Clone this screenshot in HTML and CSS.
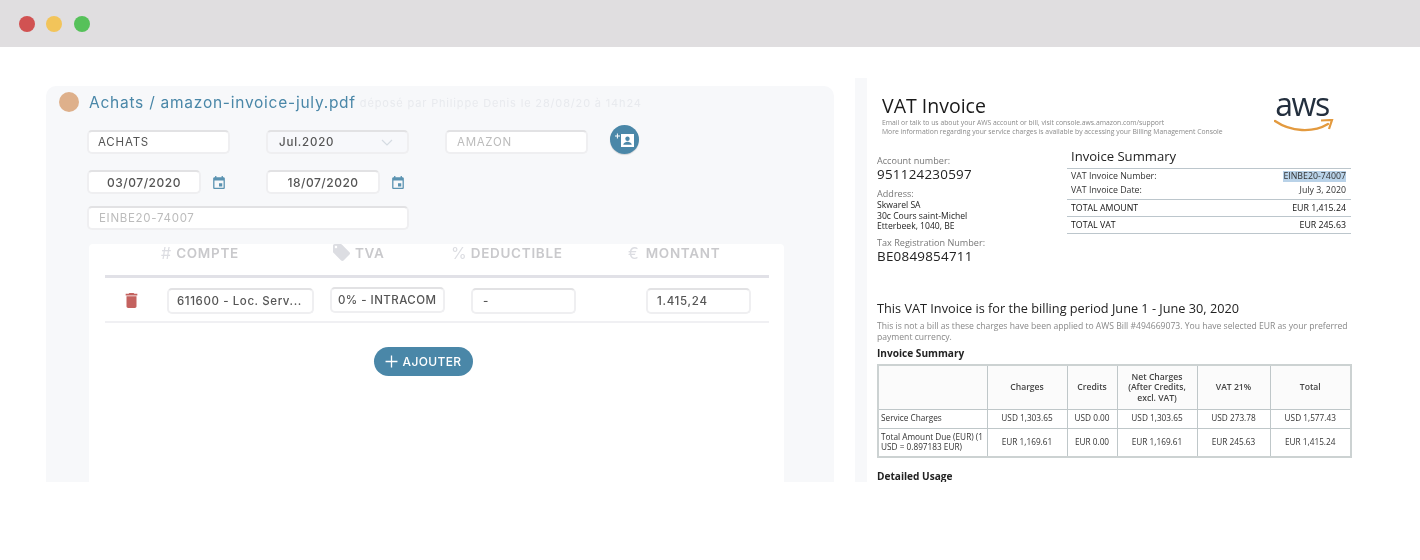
FILE: index.html
```html
<!DOCTYPE html>
<html lang="fr">
<head>
<meta charset="utf-8">
<title>Facture</title>
<link rel="stylesheet" href="styles.css">
</head>
<body>
<header class="bar">
  <span class="dot red"></span><span class="dot yellow"></span><span class="dot green"></span>
</header>
<main class="stage">
  <section class="panel">
    <div class="head">
      <span class="avatar"></span>
      <span class="title">Achats / amazon-invoice-july.pdf</span>
      <span class="meta">déposé par Philippe Denis le 28/08/20 à 14h24</span>
    </div>
    <div class="form">
      <div class="form-row">
        <div class="field wide plain">ACHATS</div>
        <div class="field wide select">Jul.2020
          <svg class="chev" viewBox="0 0 12 7"><path d="M1 1l5 5 5-5" fill="none" stroke="#d5dbe2" stroke-width="1.2"/></svg>
        </div>
        <div class="field wide ghost">AMAZON</div>
        <button class="round">
          <svg viewBox="0 0 20 16" width="20" height="16"><path d="M6 2h13v13H6z" fill="#fff"/><circle cx="12.5" cy="6.8" r="2.2" fill="#4a87a8"/><path d="M8.3 12.7c0-2 2.8-3 4.2-3s4.2 1 4.2 3z" fill="#4a87a8"/><path d="M2.4 1.5v5M0 4h5" stroke="#fff" stroke-width="1" fill="none"/></svg>
        </button>
      </div>
      <div class="form-row">
        <div class="date-cell">
          <div class="field date">03/07/2020</div>
          <svg class="cal" viewBox="3 1 18 20"><path d="M17 12h-5v5h5v-5zM16 1v2H8V1H6v2H5c-1.11 0-1.99.9-1.99 2L3 19c0 1.1.89 2 2 2h14c1.1 0 2-.9 2-2V5c0-1.1-.9-2-2-2h-1V1h-2zm3 18H5V8h14v11z"/></svg>
        </div>
        <div class="date-cell">
          <div class="field date">18/07/2020</div>
          <svg class="cal" viewBox="3 1 18 20"><path d="M17 12h-5v5h5v-5zM16 1v2H8V1H6v2H5c-1.11 0-1.99.9-1.99 2L3 19c0 1.1.89 2 2 2h14c1.1 0 2-.9 2-2V5c0-1.1-.9-2-2-2h-1V1h-2zm3 18H5V8h14v11z"/></svg>
        </div>
      </div>
      <div class="field ref ghost">EINBE20-74007</div>
    </div>
    <div class="card">
      <div class="cols">
        <div class="col c1"><span class="sym">#</span>COMPTE</div>
        <div class="col c2"><svg class="tag" viewBox="2 2 20 20"><path d="M21.41 11.58l-9-9C12.05 2.22 11.55 2 11 2H4c-1.1 0-2 .9-2 2v7c0 .55.22 1.05.59 1.42l9 9c.36.36.86.58 1.41.58.55 0 1.05-.22 1.41-.59l7-7c.37-.36.59-.86.59-1.41 0-.55-.23-1.06-.59-1.42zM5.5 7C4.67 7 4 6.33 4 5.5S4.67 4 5.5 4 7 4.67 7 5.5 6.33 7 5.5 7z"/></svg>TVA</div>
        <div class="col c3"><span class="sym">%</span>DEDUCTIBLE</div>
        <div class="col c4"><span class="sym">€</span>MONTANT</div>
      </div>
      <div class="line row">
        <svg class="trash" viewBox="5 3 14 18"><path d="M6 19c0 1.1.9 2 2 2h8c1.1 0 2-.9 2-2V7H6v12zM19 4h-3.5l-1-1h-5l-1 1H5v2h14V4z"/></svg>
        <div class="field cell f1">611600 - Loc. Serv...</div>
        <div class="field cell f2">0% - INTRACOM</div>
        <div class="field cell f3">-</div>
        <div class="field cell f4">1.415,24</div>
      </div>
      <div class="add-wrap">
        <button class="add"><svg viewBox="0 0 12 12" width="13" height="13"><path d="M6 .5v11M.5 6h11" stroke="#fff" stroke-width="1.2" fill="none"/></svg>AJOUTER</button>
      </div>
    </div>
  </section>

  <section class="doc-wrap">
    <div class="doc">
      <div class="doc-top">
        <div>
          <h1 class="vat">VAT Invoice</h1>
          <p class="tiny">Email or talk to us about your AWS account or bill, visit console.aws.amazon.com/support<br>More information regarding your service charges is available by accessing your Billing Management Console</p>
        </div>
        <div class="logo">
          <span class="aws">aws</span>
          <svg class="smile" viewBox="0 0 60 14" width="60" height="14"><path d="M1 2c16 11 38 12 53 3" fill="none" stroke="#e39a3f" stroke-width="2.4" stroke-linecap="round"/><path d="M47 1.5l11-.5-3 9" fill="none" stroke="#e39a3f" stroke-width="2.2"/></svg>
        </div>
      </div>
      <div class="doc-info">
        <div class="acct">
          <div class="lbl">Account number:</div>
          <div class="num">951124230597</div>
          <div class="lbl l2">Address:</div>
          <div class="addr">Skwarel SA<br>30c Cours saint-Michel<br>Etterbeek, 1040, BE</div>
          <div class="lbl l3">Tax Registration Number:</div>
          <div class="num">BE0849854711</div>
        </div>
        <div class="summary">
          <div class="sum-title">Invoice Summary</div>
          <div class="sum-group two">
            <div class="sum-row"><span>VAT Invoice Number:</span><span class="hl">EINBE20-74007</span></div>
            <div class="sum-row"><span>VAT Invoice Date:</span><span>July 3, 2020</span></div>
          </div>
          <div class="sum-group one"><div class="sum-row dark"><span>TOTAL AMOUNT</span><span>EUR 1,415.24</span></div></div>
          <div class="sum-group one"><div class="sum-row dark"><span>TOTAL VAT</span><span>EUR 245.63</span></div></div>
        </div>
      </div>
      <h2 class="period">This VAT Invoice is for the billing period June 1 - June 30, 2020</h2>
      <p class="note">This is not a bill as these charges have been applied to AWS Bill #494669073. You have selected EUR as your preferred payment currency.</p>
      <h3 class="sub">Invoice Summary</h3>
      <table class="tbl">
        <colgroup><col class="k1"><col class="k2"><col class="k3"><col class="k4"><col class="k5"><col class="k6"></colgroup>
        <tr class="th"><th></th><th>Charges</th><th>Credits</th><th>Net Charges<br>(After Credits,<br>excl. VAT)</th><th>VAT 21%</th><th>Total</th></tr>
        <tr class="tr1"><td class="left">Service Charges</td><td>USD 1,303.65</td><td>USD 0.00</td><td>USD 1,303.65</td><td>USD 273.78</td><td>USD 1,577.43</td></tr>
        <tr class="tr2"><td class="left">Total Amount Due (EUR) (1 USD = 0.897183 EUR)</td><td>EUR 1,169.61</td><td>EUR 0.00</td><td>EUR 1,169.61</td><td>EUR 245.63</td><td>EUR 1,415.24</td></tr>
      </table>
      <h3 class="sub usage">Detailed Usage</h3>
    </div>
  </section>
</main>
</body>
</html>
```
FILE: styles.css
```css
* { box-sizing: border-box; }
html, body { margin: 0; height: 560px; overflow: hidden; background: #fff; }
body { font-family: Inter, "Liberation Sans", sans-serif; }

.bar { height: 47px; background: #e0dee0; display: flex; align-items: center; padding: 1px 0 0 19px; gap: 11px; }
.dot { width: 16px; height: 16px; border-radius: 50%; }
.red { background: #d15252; }
.yellow { background: #f2c45a; }
.green { background: #56c15a; margin-left: 1px; }

.stage { display: flex; align-items: flex-start; padding-left: 46px; }

.panel { width: 788px; height: 396px; margin-top: 39px; background: #f7f8fa; border-radius: 10px 10px 0 0; display: flex; flex-direction: column; filter: blur(.2px); }
.head { display: flex; align-items: center; height: 32px; padding: 0 0 0 13px; }
.avatar { width: 20px; height: 20px; border-radius: 50%; background: #deb08b; margin-right: 10px; }
.title { font-size: 15.5px; letter-spacing: 0.75px; color: #4a87a8; }
.meta { font-size: 11px; letter-spacing: 0.84px; color: #e8eaee; margin-left: 4px; padding-top: 2px; }

.form { padding: 12px 0 0 41px; display: flex; flex-direction: column; gap: 16px; }
.form-row { display: flex; gap: 36px; height: 24px; }
.field { height: 24px; background: #fff; border: 2px solid #efeff1; border-top-color: #e2e2e4; border-radius: 5px; font-size: 11.5px; letter-spacing: 0.8px; color: #555; display: flex; align-items: center; white-space: nowrap; }
.wide { width: 143px; }
.plain { padding-left: 9px; }
.select { background: #f7f8fb; padding-left: 11px; font-weight: 500; position: relative; }
.chev { position: absolute; right: 14px; top: 7px; width: 12px; height: 7px; }
.ghost { color: #bcbcbc; padding-left: 10px; letter-spacing: .7px; }
.round { width: 29px; height: 29px; padding: 0; margin: -5px 0 0 -14px; border: 0; border-radius: 50%; background: #4a87a8; box-shadow: 0 1px 1px rgba(0,0,0,.15); display: flex; align-items: center; justify-content: center; }
.date-cell { width: 143px; display: flex; align-items: center; gap: 12px; }
.date { width: 114px; justify-content: center; font-weight: 500; font-size: 12px; letter-spacing: .5px; }
.cal { width: 12px; height: 13px; fill: #5b93b1; flex: none; }
.ref { width: 322px; margin-top: -4px; }

.card { width: 695px; height: 238px; margin: 14px 0 0 43px; background: #fff; border-radius: 4px 4px 0 0; padding: 0 15px 0 16px; }
.cols { height: 31px; display: flex; align-items: center; padding-bottom: 14px; font-size: 13.5px; font-weight: 600; letter-spacing: 0.7px; color: #c9c9cc; }
.col { display: flex; align-items: center; white-space: nowrap; }
.sym { font-weight: 400; font-size: 16px; color: #dcdde2; margin-right: 5px; letter-spacing: 0; }
.c1 { margin-left: 56px; width: 172px; }
.c2 { width: 118px; }
.c3 { width: 177px; }
.c3 .sym { margin-right: 4px; }
.c4 .sym { margin-right: 7px; }
.tag { width: 17px; height: 17px; fill: #dcdde2; margin-right: 5px; }
.line { border-top: 3px solid #e1e1e7; border-bottom: 2px solid #f0f0f3; }
.row { height: 48px; display: flex; align-items: flex-start; padding-left: 20px; }
.trash { width: 13px; height: 15px; fill: #c4625f; flex: none; margin: 15px 29px 0 0; }
.cell { height: 26px; font-size: 11.5px; font-weight: 500; letter-spacing: 0.6px; margin-top: 10px; }
.f1 { width: 147px; padding-left: 8px; margin-right: 16px; }
.f2 { width: 115px; padding-left: 6px; margin-right: 26px; margin-top: 9px; letter-spacing: .45px; }
.f3 { width: 105px; padding-left: 10px; margin-right: 70px; }
.f4 { width: 105px; padding-left: 9px; letter-spacing: .7px; }
.add-wrap { display: flex; justify-content: center; padding: 24px 28px 0 0; }
.add { width: 99px; height: 29px; padding: 0; border: 0; border-radius: 15px; background: #4a87a8; color: #fff; font: 500 12px Inter, sans-serif; letter-spacing: 0.35px; display: flex; align-items: center; justify-content: center; gap: 5px; }

.doc-wrap { width: 505px; height: 404px; margin: 31px 0 0 21px; padding-left: 12px; background: #f7f8fa; }
.doc { height: 404px; overflow: hidden; background: #fff; padding: 0 9px 0 10px; font-family: "Open Sans", "Liberation Sans", sans-serif; color: #222; filter: blur(.3px); }
.doc-top { display: flex; justify-content: space-between; padding: 15px 5px 0 5px; height: 71px; }
.vat { margin: 0; font-size: 19.5px; line-height: 25px; font-weight: 400; color: #1a1a1a; }
.tiny { margin: 0; font-size: 6.8px; line-height: 9px; color: #8a8a8a; }
.logo { display: flex; flex-direction: column; align-items: center; margin: -1px 12px 0 0; }
.aws { font-size: 32px; font-weight: 500; line-height: 26px; height: 27px; color: #232f3e; letter-spacing: -1.5px; margin: -1px 4px 0 0; }
.smile { margin-top: 1px; }

.doc-info { display: flex; }
.acct { width: 190px; padding-top: 6px; }
.lbl { font-size: 9.1px; line-height: 12px; color: #777; }
.num { font-size: 13.4px; line-height: 16px; color: #222; letter-spacing: .25px; margin-top: -1px; }
.l2 { margin-top: 6px; }
.l3 { margin-top: 5px; }
.addr { font-size: 8.6px; line-height: 10.7px; color: #222; }
.summary { width: 284px; margin-top: -2px; }
.sum-title { font-size: 13.1px; line-height: 17px; padding: 1px 0 3px 4px; color: #222; }
.sum-group { border-top: 1px solid #bcc6cc; padding: 2px 5px 3px 4px; }
.sum-group.one { padding: 3px 5px 2px 4px; }
.summary .sum-group:last-child { border-bottom: 1px solid #bcc6cc; }
.sum-row { display: flex; justify-content: space-between; font-size: 8.8px; line-height: 11px; color: #333; }
.two .sum-row + .sum-row { margin-top: 3px; }
.dark { color: #111; }
.hl { background: #b9d2e8; }

.period { margin: 35px 0 0; font-size: 12.72px; line-height: 18px; font-weight: 400; color: #222; }
.note { margin: 4px 0 0; font-size: 8.6px; line-height: 11px; color: #888; width: 474px; }
.sub { margin: 4px 0 0; font-size: 10.1px; line-height: 13px; font-weight: 700; color: #222; }
.tbl { margin-top: 4px; width: 473px; height: 92px; border-collapse: collapse; table-layout: fixed; border: 2px solid #ccd2d2; font-size: 8.25px; color: #333; }
.k1 { width: 109px; } .k2 { width: 80px; } .k3 { width: 50px; } .k4 { width: 80px; } .k5 { width: 73px; } .k6 { width: 81px; }
.tbl th, .tbl td { border: 1px solid #bfc7c9; padding: 0 3px; text-align: center; font-weight: 400; line-height: 10.5px; }
.tbl th { font-weight: 600; font-size: 8.6px; background: #fbfbfb; color: #444; }
.tbl .left { text-align: left; padding: 0 0 0 2px; }
.th { height: 44px; } .tr1 { height: 19px; } .tr2 { height: 29px; }
.usage { margin-top: 12px; }
```
